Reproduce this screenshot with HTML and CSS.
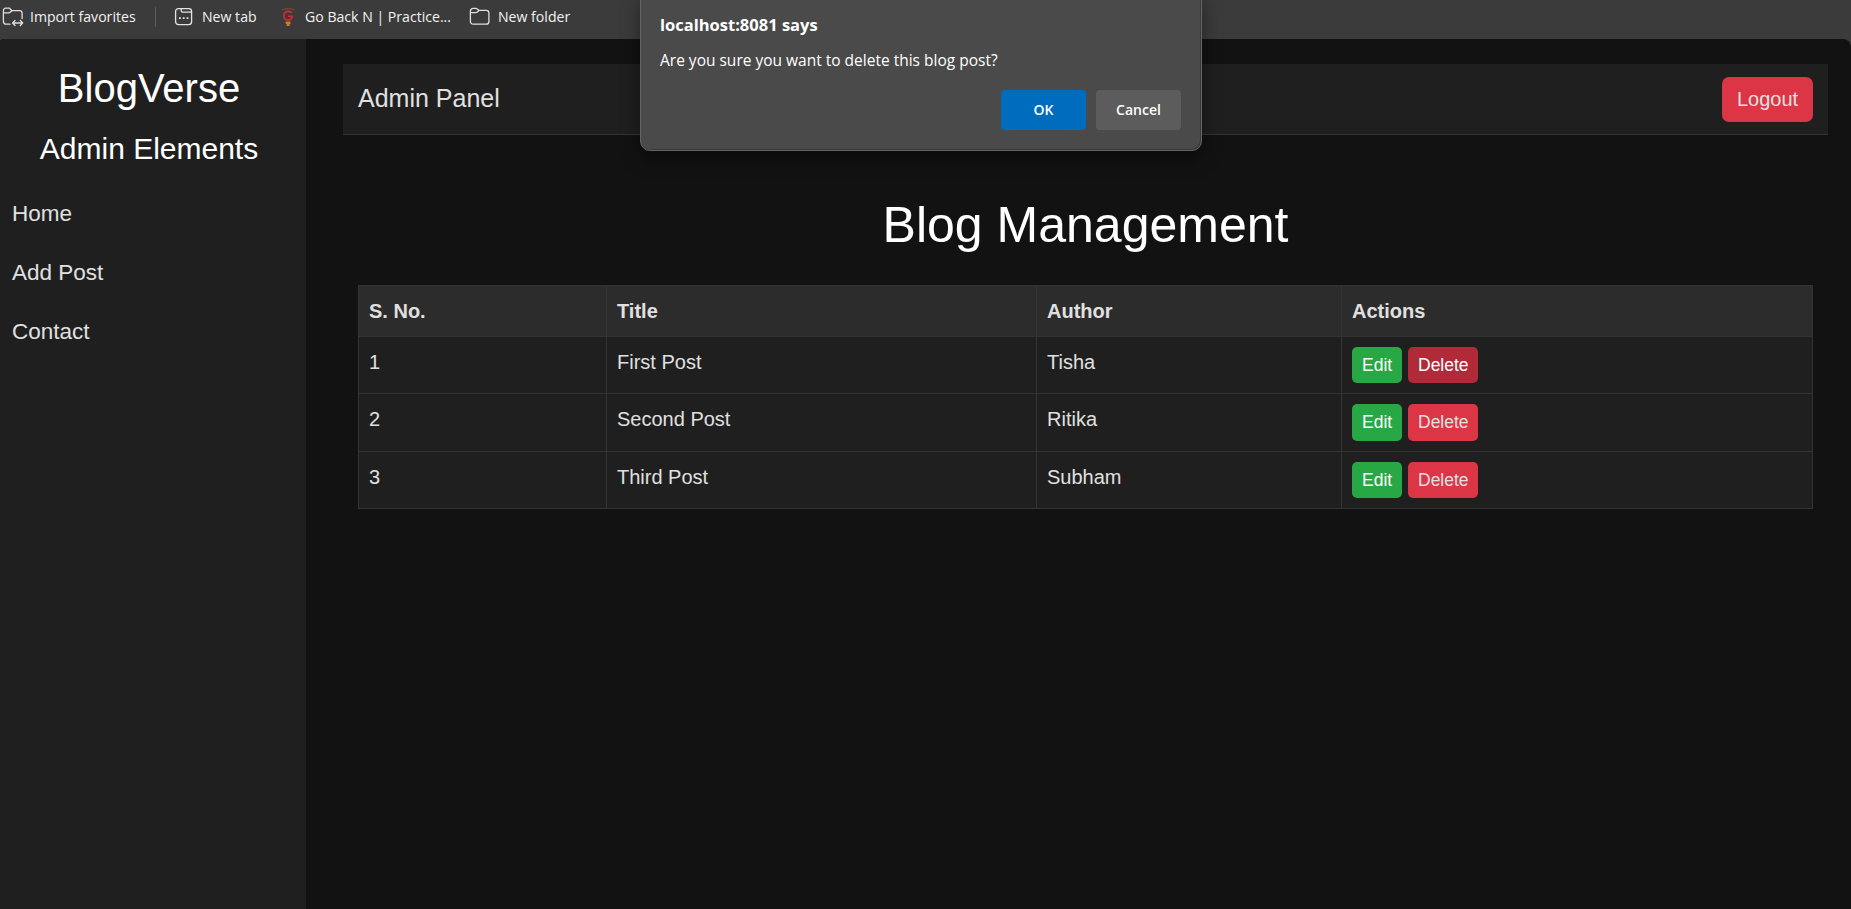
FILE: index.html
```html
<!DOCTYPE html>
<html lang="en">
<head>
<meta charset="utf-8">
<title>BlogVerse Admin</title>
<link rel="stylesheet" href="styles.css">
</head>
<body>
<div class="favbar">
  <div class="fav fav-import">
    <svg width="22" height="20" viewBox="0 0 22 20" fill="none" stroke="#dedede" stroke-width="1.3" stroke-linejoin="round" stroke-linecap="round"><path d="M8 17.2H4A2.6 2.6 0 0 1 1.400 14.600V3.400A2.200 2.200 0 0 1 3.600 1.200H7.500L10 3.700H17.500A2.600 2.600 0 0 1 20.100 6.300V11.500M1.400 5.900H6.500Q7.600 5.900 8.200 5.300L10 3.700"/><path d="M11 16H20.500M13 13.500L10.600 16L13 18.500M18.300 13.500L20.700 16L18.300 18.500"/></svg>
    <span>Import favorites</span>
  </div>
  <i class="sep"></i>
  <div class="fav fav-tab">
    <svg width="20" height="20" viewBox="0 0 20 20" fill="none" stroke="#e4e4e4" stroke-width="1.300"><rect x="1.600" y="1.600" width="16" height="16" rx="2.800"/><path d="M7.200 1.600V3.800Q7.200 5.200 8.600 5.200H17.600"/><path d="M5 11.100h1.800M8.800 11.100h1.800M12.600 11.100h1.800" stroke-width="1.800"/></svg>
    <span>New tab</span>
  </div>
  <div class="fav fav-go">
    <svg width="14" height="20" viewBox="0 0 14 20" fill="none"><path d="M1 3.200Q2.600 1.700 4.500 1.700H9.500Q11.400 1.700 13 3.200" stroke="#6b4630" stroke-width="1.600"/><path d="M10.900 5.700Q9.400 4.400 7 4.400Q2.900 4.600 2.900 8.700Q3 12.900 7 13Q11 12.900 11.200 9.300H7" stroke="#df2630" stroke-width="1.600"/><path d="M4.700 14.400H9.500V16.700L8.600 17.200V19H5.700V17.200L4.700 16.700Z" fill="#d87920"/></svg>
    <span>Go Back N | Practice...</span>
  </div>
  <div class="fav fav-folder">
    <svg width="22" height="20" viewBox="0 0 22 20" fill="none" stroke="#e0e0e0" stroke-width="1.300" stroke-linejoin="round"><path d="M1.400 4.100A2.700 2.700 0 0 1 4.100 1.400H7.400L10 3.300H17.200A2.700 2.700 0 0 1 19.900 6V14.500A2.700 2.700 0 0 1 17.200 17.200H4.100A2.700 2.700 0 0 1 1.400 14.500ZM1.400 5.600H6.700Q7.800 5.600 8.400 5L10 3.300"/></svg>
    <span>New folder</span>
  </div>
</div>
<div class="page">
  <aside class="sidebar">
    <h2 class="brand">BlogVerse</h2>
    <h4 class="subtitle">Admin Elements</h4>
    <nav class="links">
      <a>Home</a>
      <a>Add Post</a>
      <a>Contact</a>
    </nav>
  </aside>
  <main class="content">
    <header class="navbar">
      <span class="nav-title">Admin Panel</span>
      <a class="logout">Logout</a>
    </header>
    <h1 class="heading">Blog Management</h1>
    <table class="posts">
      <colgroup><col class="c-num"><col class="c-title"><col class="c-author"><col></colgroup>
      <thead><tr><th>S. No.</th><th>Title</th><th>Author</th><th>Actions</th></tr></thead>
      <tbody>
        <tr><td>1</td><td>First Post</td><td>Tisha</td><td><div class="actions"><a class="btn edit">Edit</a><a class="btn delete active">Delete</a></div></td></tr>
        <tr class="tall"><td>2</td><td>Second Post</td><td>Ritika</td><td><div class="actions"><a class="btn edit">Edit</a><a class="btn delete">Delete</a></div></td></tr>
        <tr><td>3</td><td>Third Post</td><td>Subham</td><td><div class="actions"><a class="btn edit">Edit</a><a class="btn delete">Delete</a></div></td></tr>
      </tbody>
    </table>
  </main>
</div>
<div class="dialog">
  <div class="dialog-title">localhost:8081 says</div>
  <div class="dialog-text">Are you sure you want to delete this blog post?</div>
  <div class="dialog-buttons">
    <button class="dbtn ok">OK</button>
    <button class="dbtn">Cancel</button>
  </div>
</div>
</body>
</html>
```
FILE: styles.css
```css
* { box-sizing: border-box; }
body {
  margin: 0;
  height: 909px;
  overflow: hidden;
  display: flex;
  flex-direction: column;
  background: #3b3b3b;
  color: #e0e0e0;
  font: 20px/30px "Liberation Sans", Arial, sans-serif;
}
.favbar {
  height: 39px;
  flex: none;
  display: flex;
  align-items: flex-start;
  padding: 7px 0 0 2px;
  color: #f2f2f2;
  font: 14.1px/20px "Open Sans", "Noto Sans", sans-serif;
  white-space: nowrap;
}
.fav { display: flex; }
.fav svg { flex: none; display: block; }
.fav-import { width: 153px; gap: 6px; }
.fav-tab { width: 107px; gap: 8px; }
.fav-go { width: 188px; gap: 10px; }
.fav-folder { gap: 7px; }
.sep { width: 1px; height: 20px; background: #5c5c5c; margin-right: 18px; }
.page {
  flex: 1;
  display: flex;
  background: #121212;
  border-radius: 4px 8px 0 0;
  overflow: hidden;
}
.sidebar {
  width: 306px;
  flex: none;
  background: #1f1f1f;
  padding: 25px 0 0;
}
.brand, .subtitle, .heading { margin: 0; font-weight: 500; color: #fff; text-align: center; }
.brand { font: 40px/48px "Liberation Sans", Arial, sans-serif; padding-right: 8px; }
.subtitle { font: 30px/36px "Liberation Sans", Arial, sans-serif; padding-right: 8px; margin-top: 19px; }
.links { display: flex; flex-direction: column; gap: 5px; margin-top: 20px; }
.links a { font-size: 22.5px; line-height: 34px; padding: 10px 12px; }
.content { flex: 1; padding: 25px 23px 0 37px; }
.navbar {
  height: 71px;
  display: flex;
  align-items: center;
  justify-content: space-between;
  padding: 0 15px;
  background: #1f1f1f;
  border-bottom: 1px solid #333;
}
.nav-title { font-size: 25px; padding-bottom: 2px; }
.logout {
  width: 91px;
  height: 45px;
  background: #dc3545;
  border-radius: 7px;
  line-height: 45px;
  text-align: center;
}
.heading { font: 50px/60px "Liberation Sans", Arial, sans-serif; margin: 60px 0 30px; }
.posts {
  width: 1455px;
  margin-left: 15px;
  table-layout: fixed;
  border-collapse: collapse;
  background: #1f1f1f;
}
.c-num { width: 248px; }
.c-title { width: 430px; }
.c-author { width: 305px; }
.posts th, .posts td { border: 1px solid #333; padding: 10px; vertical-align: top; text-align: left; }
.posts th { background: #2c2c2c; }
.posts tr { height: 57px; }
.posts thead tr { height: 51px; }
.posts tr.tall { height: 58px; }
.actions { display: flex; gap: 6px; height: 36px; }
.tall .actions { height: 37px; }
.btn { font-size: 17.5px; line-height: 36px; padding: 0 10px; border-radius: 5px; }
.edit { width: 50px; background: #28a745; color: #fff; }
.delete { width: 70px; background: #dc3545; }
.delete.active { background: #b02a37; color: #fff; }
.dialog {
  position: absolute;
  left: 640px;
  top: -10px;
  width: 562px;
  height: 161px;
  padding: 22px 20px 0 19px;
  background: #4a4a4a;
  border: 1px solid #666;
  border-radius: 10px;
  box-shadow: 0 8px 20px rgba(0, 0, 0, .4), inset -1px -1px 0 #383838;
  color: #fff;
  font: 15px/24px "Open Sans", "Noto Sans", sans-serif;
  white-space: nowrap;
}
.dialog-title { font-size: 16.5px; font-weight: 700; }
.dialog-text { margin-top: 11px; font-size: 15.5px; }
.dialog-buttons { display: flex; justify-content: flex-end; gap: 10px; margin-top: 18px; }
.dbtn {
  width: 85px;
  height: 40px;
  padding: 0 0 2px;
  border: 0;
  border-radius: 4px;
  background: #5c5c5c;
  color: #fff;
  font: 600 14px "Open Sans", "Noto Sans", sans-serif;
}
.ok { background: #006cbe; }
```
